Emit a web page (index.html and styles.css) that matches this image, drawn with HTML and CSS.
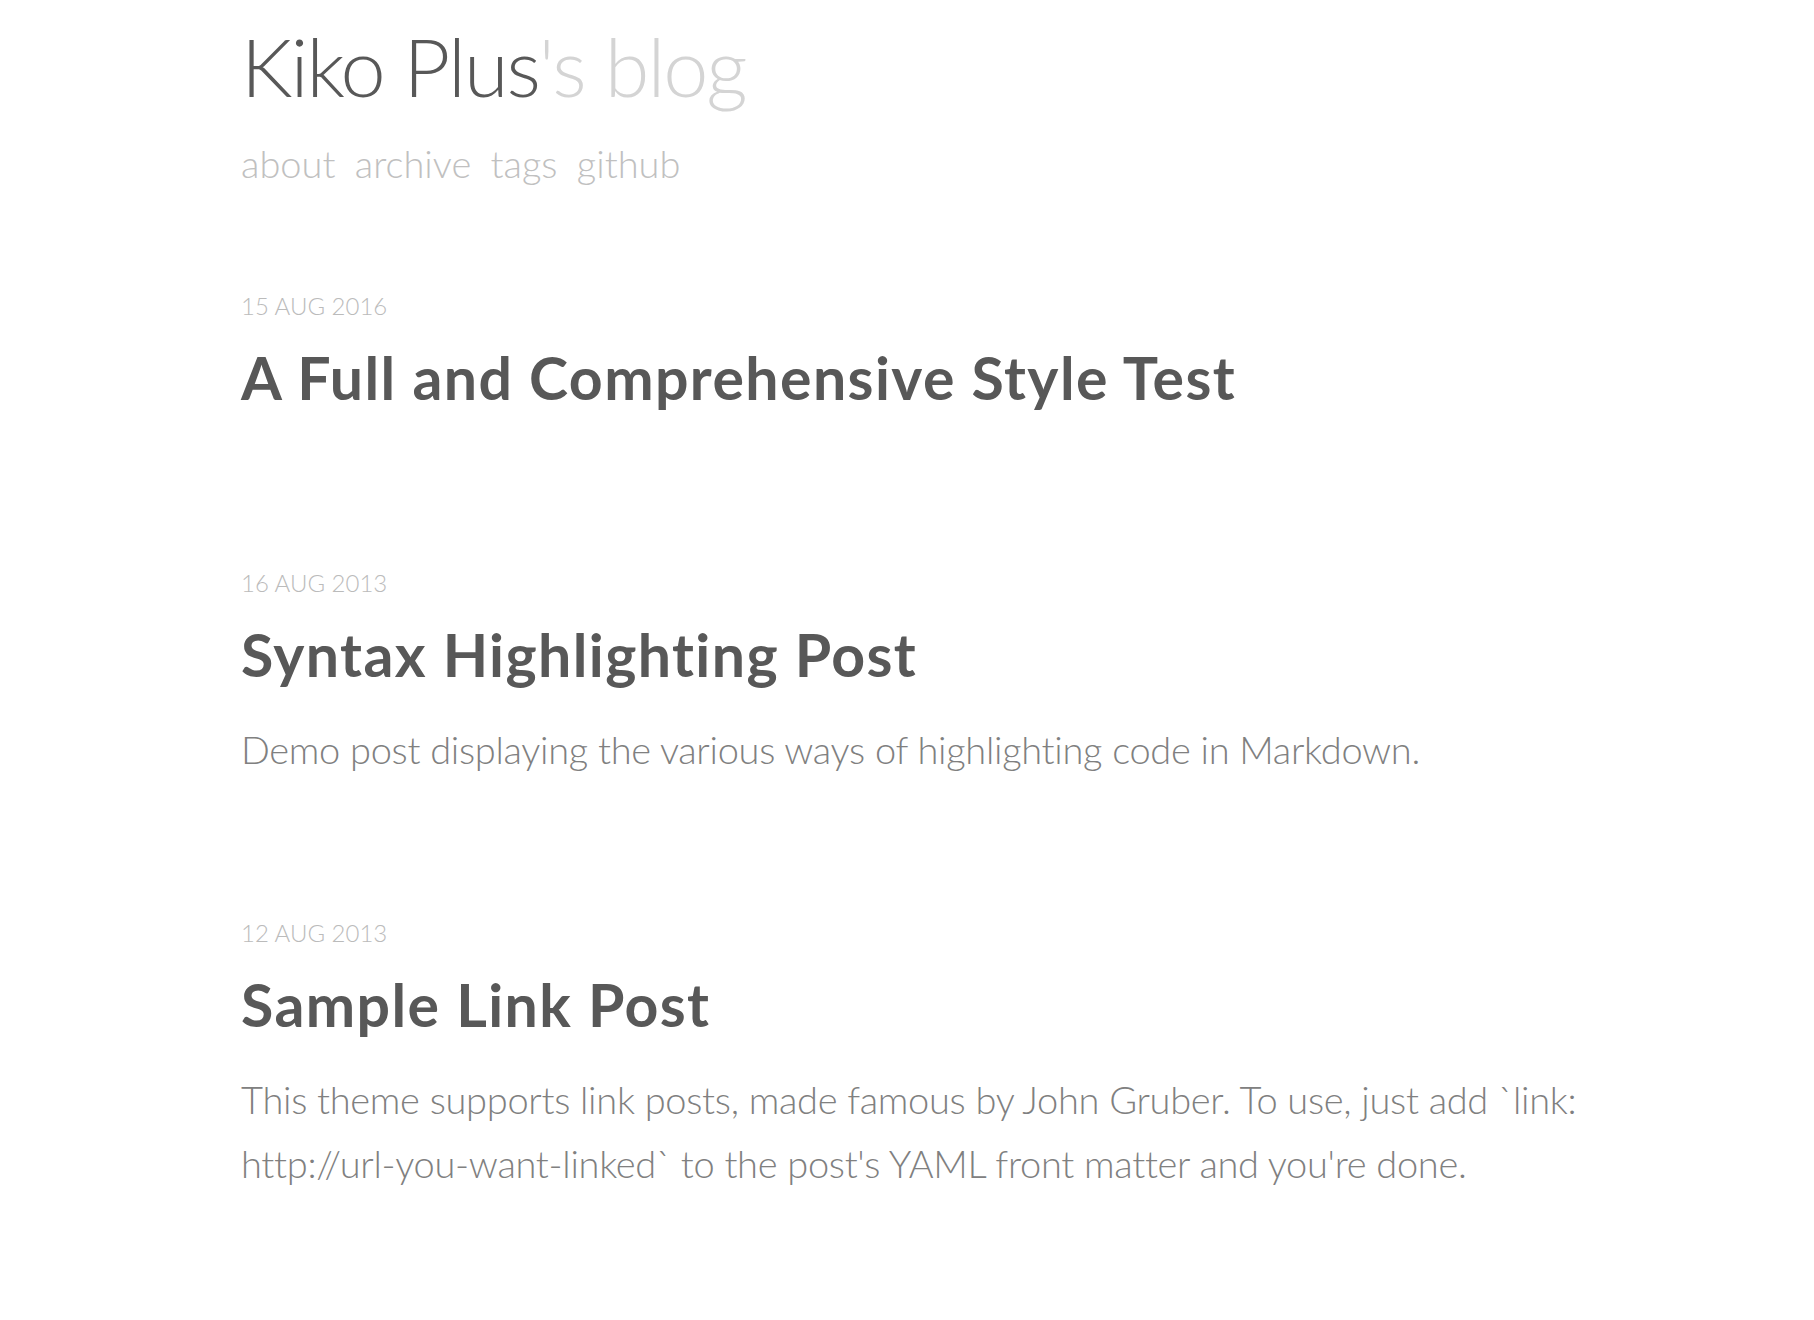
FILE: index.html
```html
<!DOCTYPE html>
<html lang="en">

<head>
  <meta charset="UTF-8">
  <meta name="viewport" content="width=device-width, initial-scale=1.0">
  <title>Kiko Plus's blog</title>

  <link rel="stylesheet" href="styles.css">
</head>

<body>
  <div class="wrapper">
    <header class="site-header">
      <h1 class="site-title">Kiko Plus<span class="title-rest">'s blog</span></h1>
      <nav class="site-nav">
        <a href="#">about</a>
        <a href="#">archive</a>
        <a href="#">tags</a>
        <a href="#">github</a>
      </nav>
    </header>

    <main class="post-list">
      <article class="post post-no-excerpt">
        <div class="post-date">15 AUG 2016</div>
        <h2 class="post-title"><a href="#">A Full and Comprehensive Style Test</a></h2>
      </article>

      <article class="post">
        <div class="post-date">16 AUG 2013</div>
        <h2 class="post-title"><a href="#">Syntax Highlighting Post</a></h2>
        <p class="post-excerpt">Demo post displaying the various ways of highlighting code in Markdown.</p>
      </article>

      <article class="post">
        <div class="post-date">12 AUG 2013</div>
        <h2 class="post-title"><a href="#">Sample Link Post</a></h2>
        <p class="post-excerpt">This theme supports link posts, made famous by John Gruber. To use, just add `link: http://url-you-want-linked` to the post's YAML front matter and you're done.</p>
      </article>
    </main>
  </div>
</body>

</html>
```

FILE: styles.css
```css
body {
  background: #fff;
  color: #585858;
  font-family: Lato, "Open Sans", sans-serif;
  margin: 0;
}

a {
  color: inherit;
  text-decoration: none;
}

.wrapper {
  padding-left: 241px;
  width: 1420px;
}

.site-title {
  font-size: 81px;
  font-weight: 300;
  letter-spacing: -2px;
  line-height: 100px;
  margin: 16px 0 0;
}

.title-rest {
  color: #d4d4d4;
}

.site-nav {
  color: #c0c0c0;
  font-size: 38px;
  font-weight: 300;
  line-height: 60px;
  margin-top: 17px;
}

.site-nav a {
  margin-right: 9px;
}

.post-list {
  margin-top: 98px;
}

.post {
  margin-bottom: 137px;
}

.post-no-excerpt {
  margin-bottom: 155px;
}

.post-date {
  color: #bbb;
  font-size: 24px;
  font-weight: 300;
  line-height: 30px;
}

.post-title {
  font-size: 59px;
  font-weight: 700;
  letter-spacing: 1.4px;
  line-height: 70px;
  margin: 22px 0 0;
}

.post-excerpt {
  color: #808080;
  font-size: 38px;
  font-weight: 300;
  letter-spacing: -0.3px;
  line-height: 64px;
  margin: 27px 0 0;
}
```
